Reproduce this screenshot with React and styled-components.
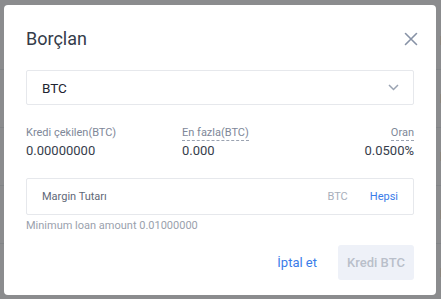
import React from 'react';
import styled, { createGlobalStyle } from 'styled-components';

const Global = createGlobalStyle`
  html, body { margin: 0; padding: 0; }
  body {
    width: 441px;
    height: 299px;
    overflow: hidden;
    font-family: Roboto, "Liberation Sans", Arial, sans-serif;
    background: #8b8c8e;
  }
`;

const Page = styled.div`
  position: relative;
  width: 441px;
  height: 299px;
  overflow: hidden;
`;

const Backdrop = styled.div`
  display: flex;
  flex-direction: column;
  padding-top: 12px;
`;

const BackRow = styled.div`
  height: 57px;
  border-bottom: 1px solid #818487;
  display: flex;
  align-items: center;
  justify-content: flex-end;
  font-size: 13px;
  color: #3d4452;
  margin-right: -7px;
`;

const Overlay = styled.div`
  position: absolute;
  inset: 0;
  padding: 5px 5px 4px 4px;
`;

const Modal = styled.div`
  width: 432px;
  height: 290px;
  background: #fff;
  border-radius: 4px;
  box-sizing: border-box;
  padding: 20px 22px 0 22px;
  display: flex;
  flex-direction: column;
`;

const Header = styled.div`
  display: flex;
  align-items: center;
  justify-content: space-between;
  height: 27px;
  margin-bottom: 18px;
`;

const Title = styled.h2`
  margin: 0;
  font-size: 18px;
  font-weight: 400;
  color: #343b49;
`;

const Close = styled.button`
  border: 0;
  background: none;
  padding: 0;
  width: 16px;
  height: 16px;
  margin-right: -5px;
  display: flex;
  align-items: center;
  justify-content: center;
  cursor: pointer;
`;

const Select = styled.div`
  height: 35px;
  border: 1px solid #e6e8ec;
  border-radius: 2px;
  box-sizing: border-box;
  display: flex;
  align-items: center;
  justify-content: space-between;
  padding: 0 14px 0 15px;
  font-size: 13.5px;
  color: #1e2532;
`;

const Stats = styled.div`
  display: grid;
  grid-template-columns: 156px 1fr auto;
  margin-top: 21px;
`;

const Stat = styled.div`
  display: flex;
  flex-direction: column;
  align-items: ${p => (p.$right ? 'flex-end' : 'flex-start')};
`;

const Label = styled.span`
  font-size: 11px;
  line-height: 13px;
  color: #7e8798;
  padding-bottom: 1px;
  border-bottom: 1px dashed ${p => (p.$dashed ? '#9aa2b0' : 'transparent')};
`;

const Value = styled.span`
  font-size: 13px;
  line-height: 15px;
  margin-top: 2px;
  color: #363d4b;
`;

const InputBox = styled.div`
  margin-top: 20px;
  height: 37px;
  border: 1px solid #e6e8ec;
  border-radius: 2px;
  box-sizing: border-box;
  display: flex;
  align-items: center;
  padding: 0 15px;
  font-size: 11px;
`;

const InputLabel = styled.span`
  flex: 1;
  color: #5f6878;
`;

const Unit = styled.span`
  color: #a7aebb;
  margin-right: 22px;
`;

const LinkText = styled.span`
  color: #3a7ce9;
  font-size: ${p => p.$size || '11px'};
  cursor: pointer;
`;

const Hint = styled.div`
  margin-top: 4px;
  font-size: 11px;
  line-height: 13px;
  color: #9aa1ad;
`;

const Footer = styled.div`
  display: flex;
  align-items: center;
  justify-content: flex-end;
  margin-top: 13px;
  gap: 21px;
`;

const Submit = styled.button`
  width: 76px;
  height: 35px;
  border: 0;
  border-radius: 3px;
  background: #eef1f8;
  color: #b9bfca;
  font-family: inherit;
  font-size: 13px;
  font-weight: 500;
`;

export default function App() {
  return (
    <Page>
      <Global />
      <Backdrop>
        {[0, 1, 2, 3, 4].map(i => (
          <BackRow key={i}>B</BackRow>
        ))}
      </Backdrop>
      <Overlay>
        <Modal>
          <Header>
            <Title>Borçlan</Title>
            <Close aria-label="close">
              <svg width="14" height="14" viewBox="0 0 14 14">
                <path d="M1.5 1.5L12.5 12.5M12.5 1.5L1.5 12.5" stroke="#8792a6" strokeWidth="1.6" strokeLinecap="round" />
              </svg>
            </Close>
          </Header>
          <Select>
            <span>BTC</span>
            <svg width="11" height="7" viewBox="0 0 11 7">
              <path d="M1 1L5.5 5.5L10 1" fill="none" stroke="#9aa3b2" strokeWidth="1.5" />
            </svg>
          </Select>
          <Stats>
            <Stat>
              <Label>Kredi çekilen(BTC)</Label>
              <Value>0.00000000</Value>
            </Stat>
            <Stat>
              <Label $dashed>En fazla(BTC)</Label>
              <Value>0.000</Value>
            </Stat>
            <Stat $right>
              <Label $dashed>Oran</Label>
              <Value>0.0500%</Value>
            </Stat>
          </Stats>
          <InputBox>
            <InputLabel>Margin Tutarı</InputLabel>
            <Unit>BTC</Unit>
            <LinkText>Hepsi</LinkText>
          </InputBox>
          <Hint>Minimum loan amount 0.01000000</Hint>
          <Footer>
            <LinkText $size="13px">İptal et</LinkText>
            <Submit disabled>Kredi BTC</Submit>
          </Footer>
        </Modal>
      </Overlay>
    </Page>
  );
}
